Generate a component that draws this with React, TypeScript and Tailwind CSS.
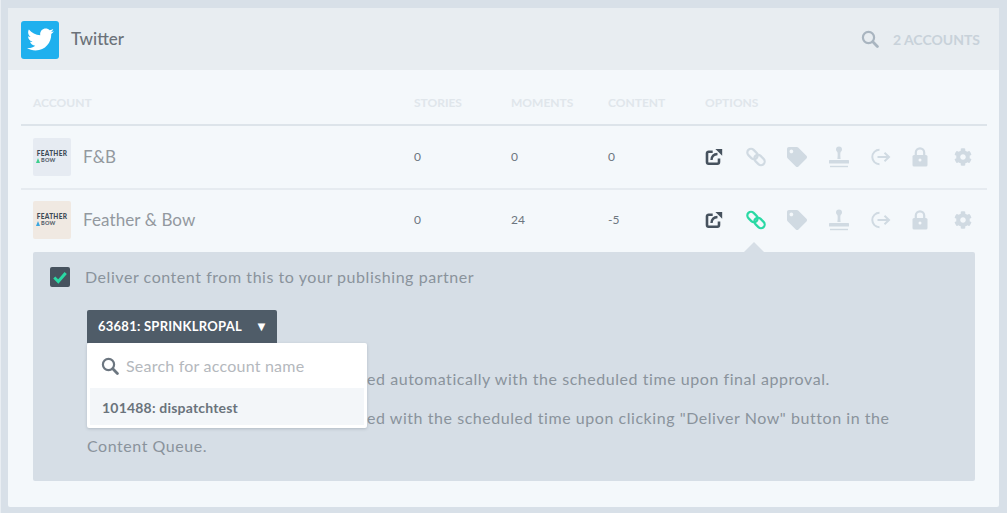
import { FaTwitter, FaTag, FaCog } from "react-icons/fa"

const columnClass = "w-[97px] shrink-0"

function SearchIcon({ className }: { className: string }) {
  return (
    <svg viewBox="0 0 18 18" fill="none" stroke="currentColor" strokeWidth="2.2" strokeLinecap="round" className={className}>
      <circle cx="7.5" cy="7.5" r="5.6" />
      <path d="M11.8 11.8 16.4 16.4" strokeWidth="2.8" />
    </svg>
  )
}

function ExternalIcon() {
  return (
    <svg viewBox="0 0 18 18" fill="none" className="w-[18px] h-[18px] text-[#46525e]" stroke="currentColor">
      <path d="M14 10.5v3.6a1.600 1.600 0 0 1-1.600 1.600H3.600A1.600 1.600 0 0 1 2 14.100V5.300a1.600 1.600 0 0 1 1.600-1.600h4.100" strokeWidth="2.600" />
      <path d="M6.500 12C6.700 8.400 9 6.200 12.500 6" strokeWidth="2.400" />
      <path d="M10.400 1h6.800v6.800z" fill="currentColor" stroke="none" />
    </svg>
  )
}

function LinkIcon({ active }: { active: boolean }) {
  return (
    <svg viewBox="0 0 20 20" fill="none" stroke="currentColor" strokeWidth="2.2" className={active ? "w-[20px] h-[20px] text-[#2ad9a4]" : "w-[20px] h-[20px] text-[#d0dae2]"}>
      <rect x="0.700" y="3.300" width="11.600" height="7.400" rx="3.700" transform="rotate(45 6.500 7)" />
      <rect x="7.700" y="9.300" width="11.600" height="7.400" rx="3.700" transform="rotate(45 13.500 13)" />
    </svg>
  )
}

function StampIcon() {
  return (
    <svg viewBox="0 0 20 22" fill="#d0dae2" className="w-[20px] h-[22px]">
      <path d="M10 0.500a3 3 0 0 1 3 3c0 1.300-1.200 2.100-1.500 3.100-.3 1-.2 4 .1 6.400H8.400c.3-2.400.4-5.400.1-6.400C8.200 5.600 7 4.800 7 3.500a3 3 0 0 1 3-3z" />
      <rect x="0" y="14" width="20" height="3.600" rx="0.600" />
      <rect x="1" y="19.800" width="18" height="1.400" />
    </svg>
  )
}

function SignOutIcon() {
  return (
    <svg viewBox="0 0 20 18" fill="none" stroke="#d0dae2" strokeWidth="2" className="w-[20px] h-[18px]">
      <path d="M8.500 1.800a7.200 7.200 0 1 0 0 14.400" />
      <path d="M6.500 9H18" />
      <path d="M13.500 4.800 18 9 13.500 13.200" />
    </svg>
  )
}

function LockIcon() {
  return (
    <svg viewBox="0 0 16 20" className="w-[16px] h-[20px]">
      <path d="M3.800 9V5.500a4.200 4.200 0 0 1 8.400 0V9" fill="none" stroke="#d0dae2" strokeWidth="2.200" />
      <rect x="0.500" y="8" width="15" height="11.500" rx="1.600" fill="#d0dae2" />
      <circle cx="8" cy="13" r="1.500" fill="#f4f8fb" />
    </svg>
  )
}

function OptionIcons({ active }: { active: boolean }) {
  return (
    <div className="flex items-center">
      <span className="w-[41px] flex justify-start"><ExternalIcon /></span>
      <span className="w-[41px] flex justify-start"><LinkIcon active={active} /></span>
      <span className="w-[42px] flex justify-start"><FaTag className="w-[20px] h-[20px] text-[#d0dae2]" /></span>
      <span className="w-[42px] flex justify-start"><StampIcon /></span>
      <span className="w-[41px] flex justify-start"><SignOutIcon /></span>
      <span className="w-[42px] flex justify-start"><LockIcon /></span>
      <span className="w-[20px] flex justify-start"><FaCog className="w-[18px] h-[18px] text-[#d0dae2]" /></span>
    </div>
  )
}

function Logo({ bg, mark }: { bg: string; mark: string }) {
  return (
    <div className={`w-[38px] h-[38px] rounded-[2px] flex flex-col justify-center items-center ${bg}`}>
      <div className="text-[6.500px] leading-[6px] font-black tracking-[0.3px] text-[#3c4a56]">FEATHER</div>
      <div className="w-[32px] flex items-center text-[5.500px] leading-[6px] font-black tracking-[0.3px] text-[#55616c]">
        <span className={`w-0 h-0 mr-[1px] border-x-[2.500px] border-x-transparent border-b-[5px] ${mark}`} />
        BOW
      </div>
    </div>
  )
}

function AccountRow({ name, stories, moments, content, logoBg, mark, active }: {
  name: string
  stories: string
  moments: string
  content: string
  logoBg: string
  mark: string
  active: boolean
}) {
  return (
    <div className="h-[64px] last:h-[62px] last:pb-[2px] flex items-center pl-[12px] text-[12px] text-[#6d7680] border-b-2 border-[#e6ebf0] last:border-b-0">
      <div className="w-[381px] shrink-0 flex items-center gap-[12px]">
        <Logo bg={logoBg} mark={mark} />
        <span className="mb-[1px] text-[17px] tracking-[0.1px] text-[#93999f]">{name}</span>
      </div>
      <div className={columnClass}>{stories}</div>
      <div className={columnClass}>{moments}</div>
      <div className={columnClass}>{content}</div>
      <OptionIcons active={active} />
    </div>
  )
}

export default function App() {
  return (
    <div className="h-[513px] bg-[#d8e0e8] border-l border-[#e9eef3] pt-[8px] pb-[6px] pl-[7px] pr-[8px] text-[#87909a]" style={{ fontFamily: '"Lato", "Open Sans", sans-serif' }}>
      <div className="h-full bg-[#f4f8fb] rounded-[2px] flex flex-col">
        <header className="h-[62px] shrink-0 bg-[#e8edf1] flex items-center pl-[13px] pr-[19px]">
          <div className="mt-[1px] w-[38px] h-[38px] rounded-[3px] bg-[#1fb0ee] flex items-center justify-center">
            <FaTwitter className="w-[27px] h-[27px] text-white" />
          </div>
          <h1 className="ml-[12px] text-[17px] font-medium text-[#6b7279]">Twitter</h1>
          <div className="ml-auto flex items-center gap-[14px]">
            <SearchIcon className="w-[18px] h-[18px] text-[#a9b5c0]" />
            <span className="text-[14px] font-bold text-[#c8d2da]">2 ACCOUNTS</span>
          </div>
        </header>

        <div className="flex-1 pl-[13px] pr-[12px]">
          <div className="h-[56px] flex items-center pt-[12px] pl-[12px] border-b-2 border-[#dde4ea] text-[12px] font-bold text-[#e0e6eb]">
            <div className="w-[381px] shrink-0">ACCOUNT</div>
            <div className={columnClass}>STORIES</div>
            <div className={columnClass}>MOMENTS</div>
            <div className={columnClass}>CONTENT</div>
            <div>OPTIONS</div>
          </div>

          <div>
            <AccountRow name="F&B" stories="0" moments="0" content="0" logoBg="bg-[#e6ebf2]" mark="border-b-[#3ecf8e]" active={false} />
            <AccountRow name="Feather & Bow" stories="0" moments="24" content="-5" logoBg="bg-[#f0e9e2]" mark="border-b-[#3aa6e0]" active />
          </div>

          <section className="relative mx-[12px] h-[229px] bg-[#d6dee6] rounded-[2px] pt-[13px] pl-[17px] pr-[60px] text-[16px] tracking-[0.55px] text-[#8a939c]">
            <span className="absolute -top-[10px] left-[711px] w-0 h-0 border-x-[10px] border-x-transparent border-b-[10px] border-b-[#d6dee6]" />
            <div className="flex items-center gap-[15px] h-[24px]">
              <span className="w-[20px] h-[20px] rounded-[2px] bg-[#46525e] flex items-center justify-center">
                <svg viewBox="0 0 14 14" fill="none" stroke="#2ad9a4" strokeWidth="2.600" className="w-[16px] h-[16px]">
                  <path d="M2 7.500 5.500 11 12 3.500" />
                </svg>
              </span>
              <span>Deliver content from this to your publishing partner</span>
            </div>

            <div className="pl-[37px]">
              <div className="relative mt-[21px] flex tracking-normal">
                <button className="h-[33px] w-[190px] bg-[#4f5c68] rounded-t-[2px] flex items-center pl-[11px] text-[13px] tracking-[0.25px] font-bold text-white">
                  63681: SPRINKLROPAL
                  <span className="ml-[13px] text-[13px]">▼</span>
                </button>
                <div className="absolute top-[33px] left-0 z-10 w-[280px] h-[85px] bg-white rounded-[2px] shadow-[0_1px_3px_rgba(70,82,94,0.25)] px-[3px] pb-[3px] flex flex-col">
                  <div className="h-[45px] flex items-center gap-[7px] pl-[11px]">
                    <SearchIcon className="w-[18px] h-[18px] text-[#6c7680]" />
                    <span className="text-[16px] tracking-[0.22px] text-[#b4b8bd]">Search for account name</span>
                  </div>
                  <div className="flex-1 bg-[#f3f6f9] flex items-center pl-[12px] pt-[2px] text-[14px] tracking-[0.2px] font-bold text-[#6a737c]">
                    101488: dispatchtest
                  </div>
                </div>
              </div>
              <p className="mt-[26px] leading-[20px] indent-[280px]">ed automatically with the scheduled time upon final approval.</p>
              <p className="mt-[15px] leading-[28px] indent-[280px]">ed with the scheduled time upon clicking "Deliver Now" button in the Content Queue.</p>
            </div>
          </section>
        </div>
      </div>
    </div>
  )
}
